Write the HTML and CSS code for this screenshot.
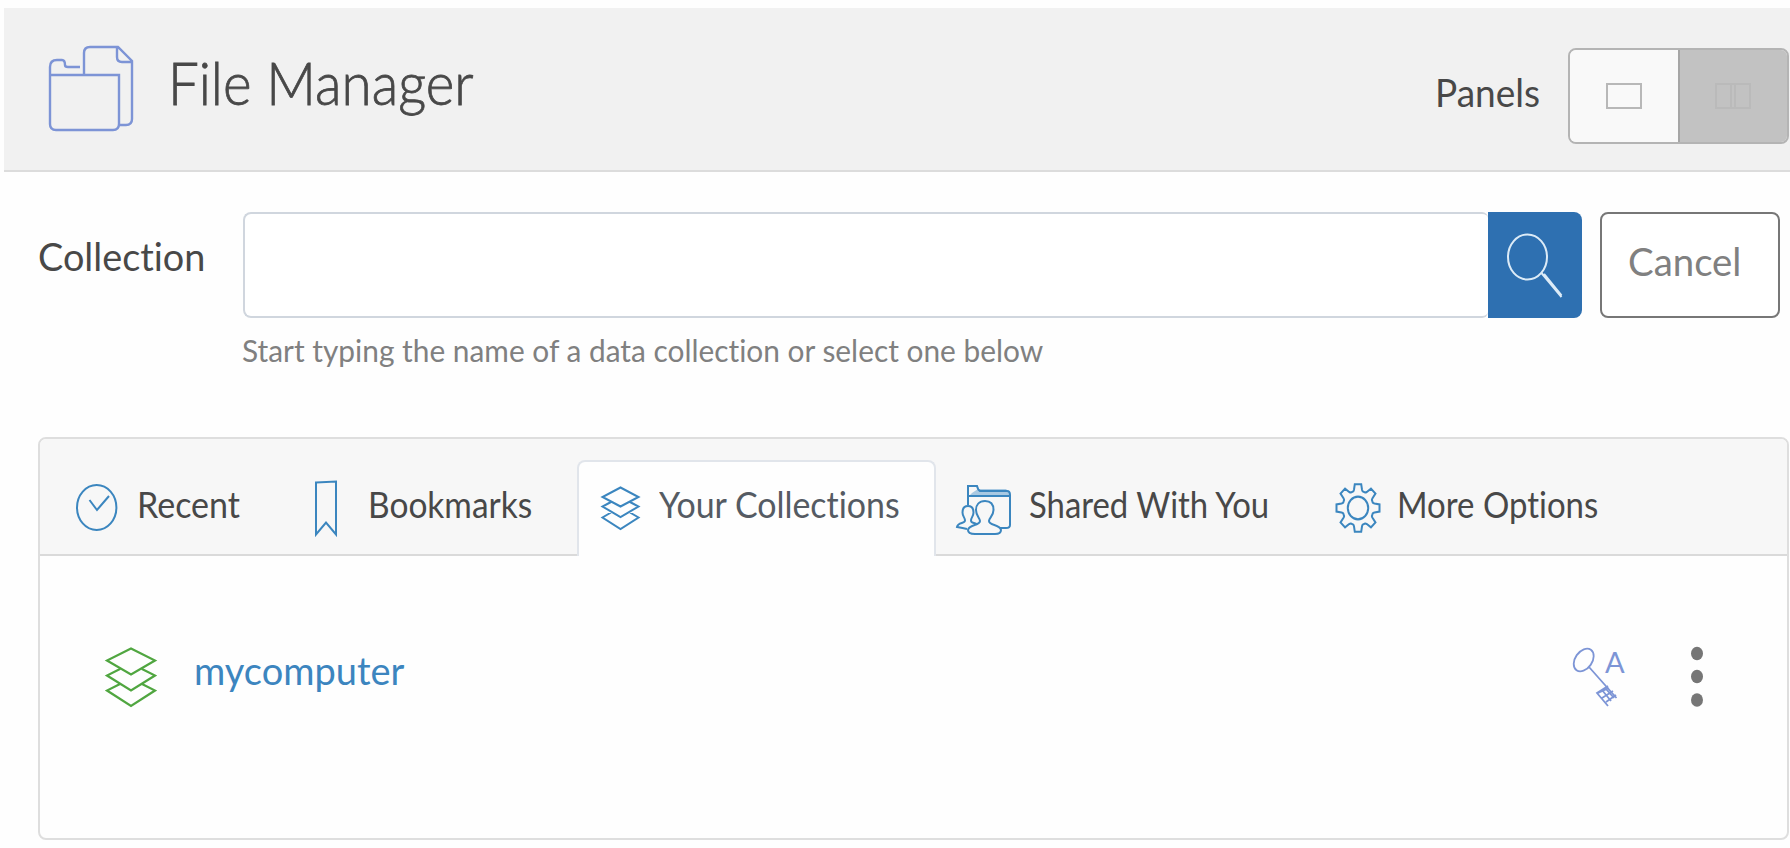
FILE: index.html
```html
<!DOCTYPE html>
<html lang="en">
<head>
<meta charset="utf-8">
<title>File Manager</title>
<link rel="stylesheet" href="styles.css">
</head>
<body>
<header class="header">
  <svg class="header-icon" width="90" height="90" viewBox="46 43 90 90">
    <path d="M50 75V67q0-7 7-7h5q3 0 3 5q0 2 3 2h12M84 74V53q0-6 6-6h28l14 14v58q0 6-6 6h-6M117 48v9q0 5 5 5h9M50 75h69v49q0 6-6 6H56q-6 0-6-6z"/>
  </svg>
  <h1 class="title"><span class="fit">File Manager</span></h1>
  <div class="panels">
    <span class="panels-label"><span class="fit">Panels</span></span>
    <div class="toggle">
      <button class="toggle-btn" aria-label="One panel">
        <svg width="36" height="26" viewBox="0 0 36 26"><path d="M1 1h34v24H1z"/></svg>
      </button>
      <button class="toggle-btn toggle-on" aria-label="Two panels">
        <svg width="36" height="26" viewBox="0 0 36 26"><path d="M1 1h34v24H1zM16 1v24M20 1v24"/></svg>
      </button>
    </div>
  </div>
</header>

<main>
  <section class="search">
    <label class="search-label" for="collection"><span class="fit">Collection</span></label>
    <div class="search-field">
      <div class="search-row">
        <input class="search-input" id="collection" type="text">
        <button class="search-btn" aria-label="Search">
          <svg width="94" height="106" viewBox="1488 212 94 106"><ellipse cx="1527.5" cy="257" rx="19.5" ry="22.5"/><path d="M1541.500 273l20 24M1544 274l17.500 21.500"/></svg>
        </button>
        <button class="cancel"><span class="fit">Cancel</span></button>
      </div>
      <p class="hint"><span class="fit">Start typing the name of a data collection or select one below</span></p>
    </div>
  </section>

  <section class="card">
    <nav class="tabs">
      <a class="tab tab-recent">
        <svg width="44" height="60" viewBox="74 478 44 60"><ellipse cx="95.7" cy="507.5" rx="19.7" ry="22.5"/><path d="M88.500 500l7.500 10l12-14"/></svg>
        <span class="fit">Recent</span>
      </a>
      <a class="tab tab-bookmarks">
        <svg width="30" height="60" viewBox="308 478 30 60"><path d="M313 482.500l20-1v53l-10-12l-10 12z"/></svg>
        <span class="fit">Bookmarks</span>
      </a>
      <a class="tab tab-active">
        <svg width="44" height="60" viewBox="598 478 44 60"><path d="M620.500 487.500l18 9.500l-18 9.500l-18-9.500zM611 502l-8.500 4.500l18 10.500l18-10.500l-8.500-4.500M611 512.500l-8.500 5l18 11.500l18-11.500l-8.500-5"/></svg>
        <span class="fit">Your Collections</span>
      </a>
      <a class="tab tab-shared">
        <svg width="60" height="60" viewBox="954 478 60 60">
          <path class="folder-band" d="M978 489h28l4 4v4h-42l4-4z"/>
          <path d="M968 505V486h9q1 4 3 5h27q3 0 3 4v30q0 3-4 3h-6M968 496h42"/>
          <path d="M985 501c6 0 8.500 4 8.500 9c0 6-4.500 8-4.500 11c0 5 11 3 12 9c0 3-3 4-6 4h-20c-4 0-7-1-7-4c1-6 12-4 12-9c0-3-4-5-4-11c0-5 3-9 9-9z"/>
          <path d="M968 506c4 0 5.500 3 5.500 6.500c0 4-2.500 5-2.500 8c0 3 4 2 6 4M968 506c-4 0-5.500 3-5.500 6.500c0 4 2.500 5 2.500 8c0 3.500-7 1.500-8 6.500q6 1 10 2"/>
        </svg>
        <span class="fit">Shared With You</span>
      </a>
      <a class="tab tab-more">
        <svg width="48" height="60" viewBox="-24 -30 48 60">
          <defs><path id="tooth" d="M-6.300 -14.800Q-4.500 -14-4-16.500L-3.200-21.500H3.200L4-16.500Q4.500-14 6.300-14.800" vector-effect="non-scaling-stroke"/></defs>
          <g transform="scale(1 1.11)">
            <use href="#tooth"/><use href="#tooth" transform="rotate(45)"/><use href="#tooth" transform="rotate(90)"/><use href="#tooth" transform="rotate(135)"/><use href="#tooth" transform="rotate(180)"/><use href="#tooth" transform="rotate(225)"/><use href="#tooth" transform="rotate(270)"/><use href="#tooth" transform="rotate(315)"/>
            <circle r="10.200"/>
          </g>
        </svg>
        <span class="fit">More Options</span>
      </a>
    </nav>
    <div class="entry">
      <svg class="entry-icon" width="56" height="66" viewBox="103 645 56 66"><path d="M131 648.500l24 12l-24 14l-24-14zM120 669l-13 6.500l24 15l24-15l-13-6.500M120 684l-13 6.500l24 15.500l24-15.500l-13-6.500"/></svg>
      <a class="entry-name"><span class="fit">mycomputer</span></a>
      <svg class="key" width="60" height="66" viewBox="1570 645 60 66">
        <ellipse cx="1583.700" cy="660" rx="8.500" ry="12.500" transform="rotate(35 1583.700 660)"/>
        <path d="M1589 667l27.500 31M1608 686l-11 7l11 13M1602 690l9 11M1606 689l8 9M1598 693l11-5M1602 698l11-7M1606 702l10-7"/>
        <text x="1605" y="673">A</text>
      </svg>
      <svg class="menu" width="16" height="66" viewBox="0 0 16 66"><ellipse cx="8" cy="8.500" rx="6" ry="6.700"/><ellipse cx="8" cy="31.500" rx="6" ry="6.700"/><ellipse cx="8" cy="55" rx="6" ry="6.700"/></svg>
    </div>
  </section>
</main>
</body>
</html>
```
FILE: styles.css
```css
* { box-sizing: border-box; }
body {
  margin: 0;
  padding: 8px 0 0 4px;
  height: 848px;
  overflow: hidden;
  background: #fefefe;
  color: #484848;
  font-family: Lato, "Noto Sans", sans-serif;
  font-size: 38px;
  line-height: 48px;
  font-variant-ligatures: none;
}
svg { fill: none; stroke-width: 2; flex: none; display: block; }
button { font: inherit; padding: 0; cursor: pointer; }
/* Condensed lettering: each label sets its own horizontal scale. */
.fit {
  display: inline-block;
  white-space: nowrap;
  transform: scaleX(var(--fit, 1));
  transform-origin: 0 50%;
}

.header {
  display: flex;
  height: 164px;
  background: #f1f1f1;
  border-bottom: 2px solid #dcdcdc;
}
.header-icon { margin: 35px 0 0 42px; stroke: #7d94d6; stroke-width: 2.4; }
.title {
  margin: 44px 0 0 32px;
  font-size: 60px;
  line-height: 60px;
  font-weight: 300;
  -webkit-text-stroke: .8px #484848;
  --fit: .912;
}
.panels { display: flex; margin-left: auto; margin-right: 1px; padding-top: 40px; }
.panels-label { width: 133px; padding-top: 20px; --fit: .975; }
.toggle { display: flex; width: 221px; height: 96px; border: 2px solid #b4b4b4; border-radius: 8px; overflow: hidden; }
.toggle-btn { display: flex; align-items: center; justify-content: center; flex: 1; border: 0; background: #f9f9f9; stroke: #b8b8b8; }
.toggle-on { background: #c2c2c2; border-left: 2px solid #a6a6a6; stroke: #bababa; }

.search { display: flex; padding: 40px 10px 0 34px; }
.search-label { width: 205px; padding-top: 20px; --fit: .995; }
.search-field { flex: 1; }
.search-row { display: flex; height: 106px; }
.search-input { flex: 1; min-width: 0; border: 2px solid #d0d6de; border-right: 0; border-radius: 8px 6px 6px 8px; background: #fff; font: inherit; padding: 0 20px; }
.search-btn { width: 94px; border: 0; background: #2e70b1; border-radius: 0 8px 8px 0; stroke: #dcebf7; }
.cancel { width: 180px; margin-left: 18px; padding: 0 0 8px 26px; border: 2px solid #777; border-radius: 8px; background: #fff; color: #808080; text-align: left; --fit: 1.01; }
.hint { margin: 8px 0 0 -1px; color: #808080; font-size: 31px; --fit: .963; }

.card { margin: 63px 1px 0 34px; height: 403px; border: 2px solid #dedede; border-radius: 8px; background: #fefefe; }
.tabs { display: flex; height: 117px; padding-top: 21px; background: #f7f7f7; border-bottom: 2px solid #dadada; border-radius: 6px 6px 0 0; font-size: 36px; }
.tab { display: flex; height: 96px; padding-top: 18px; stroke: #3b86bf; }
.tab .fit { stroke: none; padding-top: 2px; }
.tab-recent { width: 240px; padding-left: 35px; gap: 18px; --fit: .945; }
.tab-bookmarks { width: 297px; padding-left: 31px; gap: 27px; --fit: .93; }
.tab-active { width: 359px; padding: 16px 0 0 19px; gap: 17px; background: #fefefe; border: 2px solid #e1e5eb; border-bottom: 0; border-radius: 8px 8px 0 0; color: #555b63; --fit: .942; }
.tab-shared { width: 375px; padding-left: 18px; gap: 15px; --fit: .913; }
.tab-more { padding-left: 23px; gap: 15px; --fit: .915; }
.folder-band { fill: #a9c9e2; stroke: none; }

.entry { display: flex; align-items: flex-start; padding: 89px 82px 0 63px; }
.entry-icon { stroke: #50a640; stroke-width: 2.2; }
.entry-name { flex: 1; padding: 1px 0 0 35px; color: #3c85bf; }
.key { margin-right: 59px; stroke: #7d95d6; stroke-width: 1.8; }
.key text { fill: #7d95d6; stroke: none; font-size: 29px; }
.menu { fill: #767676; }
```
